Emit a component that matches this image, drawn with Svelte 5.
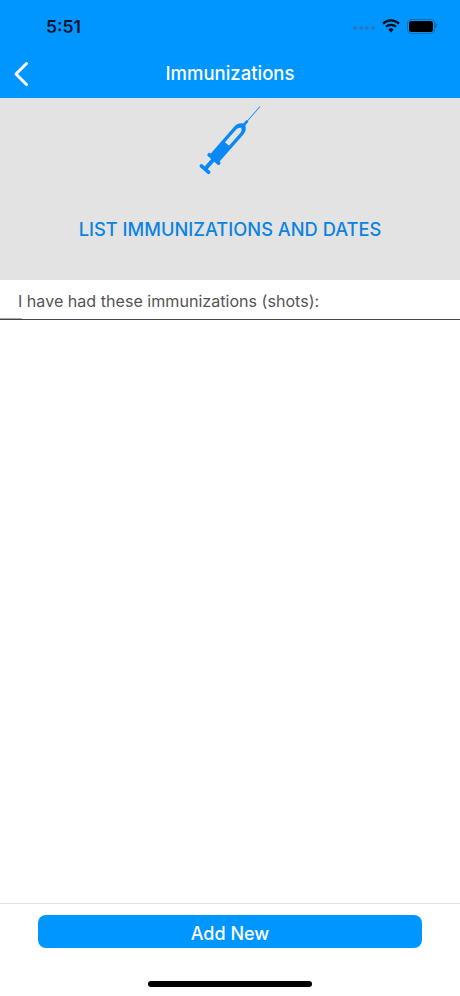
<script>
  const title = 'Immunizations'
</script>

<div class="screen">
  <header>
    <div class="status">
      <span class="time">5:51</span>
      <div class="status-icons">
        <div class="dots"><i></i><i></i><i></i><i></i></div>
        <svg class="wifi" width="18" height="14" viewBox="0 0 18 14">
          <path d="M1 4.6a11.6 11.6 0 0 1 16 0" fill="none" stroke="#050a14" stroke-width="2.2" />
          <path d="M4 7.8a7.3 7.3 0 0 1 10 0" fill="none" stroke="#050a14" stroke-width="2.2" />
          <path d="M9 13.4 6.4 10.5a3.8 3.8 0 0 1 5.2 0z" fill="#050a14" />
        </svg>
        <div class="battery"><div class="level"></div></div>
      </div>
    </div>
    <div class="nav">
      <svg class="back" width="16" height="26" viewBox="0 0 16 26">
        <path d="M13.5 2.5 3 13l10.5 10.5" fill="none" stroke="#fff" stroke-width="3" stroke-linecap="round" stroke-linejoin="round" />
      </svg>
      <h1>{title}</h1>
    </div>
  </header>

  <section class="hero">
    <svg class="syringe" width="70" height="74" viewBox="0 0 70 74">
      <g transform="translate(65 3.5) rotate(41.3)" fill="#0a88f5">
        <rect x="-0.4" y="0" width="0.8" height="22" />
        <rect x="-1.3" y="19" width="2.6" height="6" />
        <path fill-rule="evenodd" d="M-6 32q0-6 6-9q6 3 6 9V70h-12zM-2.7 33V50h5.4V33q0-3-2.7-4.6q-2.7 1.6-2.7 4.6z" />
        <rect x="-8" y="68" width="16" height="3.6" rx="1.4" />
        <rect x="-2" y="70" width="4" height="13" />
        <rect x="-6.5" y="81.5" width="13" height="3.6" rx="1.5" />
      </g>
    </svg>
    <h2>LIST IMMUNIZATIONS AND DATES</h2>
  </section>

  <div class="intro">I have had these immunizations (shots):</div>

  <div class="list"></div>

  <footer>
    <button type="button"><span>Add New</span></button>
    <div class="home-bar"></div>
  </footer>
</div>

<style>
  :global(body) {
    margin: 0;
    background: #fff;
  }
  .screen {
    width: 460px;
    height: 996px;
    display: flex;
    flex-direction: column;
    font-family: Inter, "Liberation Sans", sans-serif;
    overflow: hidden;
  }
  header {
    height: 98px;
    background: #0096ff;
    display: flex;
    flex-direction: column;
    flex-shrink: 0;
  }
  .status {
    height: 54px;
    display: flex;
    justify-content: space-between;
    align-items: center;
    padding: 0 25px 2px 46px;
    box-sizing: border-box;
  }
  .time {
    font-size: 17.5px;
    font-weight: 600;
    color: #07162b;
  }
  .status-icons {
    display: flex;
    align-items: center;
    gap: 6px;
  }
  .dots {
    display: flex;
    gap: 2px;
    margin-right: 1px;
    margin-top: 4px;
  }
  .dots i {
    width: 4px;
    height: 4px;
    border-radius: 50%;
    background: #2a78c4;
  }
  .battery {
    width: 24px;
    height: 11px;
    border: 1px solid #1a6db5;
    border-radius: 4px;
    padding: 1px;
    position: relative;
    margin-left: 1px;
  }
  .battery::after {
    content: '';
    position: absolute;
    right: -3px;
    top: 3px;
    width: 2px;
    height: 5px;
    border-radius: 0 2px 2px 0;
    background: #1a6db5;
  }
  .level {
    width: 100%;
    height: 100%;
    background: #000;
    border-radius: 2.5px;
  }
  .nav {
    flex: 1;
    position: relative;
    display: flex;
    align-items: center;
    justify-content: center;
  }
  .back {
    position: absolute;
    left: 13px;
    top: 7px;
  }
  h1 {
    margin: 0 0 7px;
    font-size: 18.5px;
    font-weight: 500;
    color: #fff;
  }
  .hero {
    height: 182px;
    background: #e3e3e3;
    display: flex;
    flex-direction: column;
    align-items: center;
    flex-shrink: 0;
  }
  .syringe {
    margin-top: 5px;
    margin-left: -1px;
  }
  h2 {
    margin: 41px 0 0;
    font-size: 18.3px;
    font-weight: 550;
    color: #0a84e0;
  }
  .intro {
    height: 28px;
    border-bottom: 1px solid #444;
    padding: 11px 0 0 18px;
    font-size: 16.1px;
    color: #555;
    flex-shrink: 0;
    position: relative;
  }
  /* short darker tick where the line starts */
  .intro::after {
    content: '';
    position: absolute;
    left: 0;
    bottom: 0;
    width: 22px;
    height: 1px;
    background: #aaa;
  }
  .list {
    flex: 1;
  }
  footer {
    height: 92px;
    border-top: 1px solid #e2e2e2;
    display: flex;
    flex-direction: column;
    align-items: center;
    flex-shrink: 0;
  }
  button {
    width: 384px;
    height: 33px;
    margin-top: 11px;
    border: 0;
    padding: 3px 0 0;
    border-radius: 8px;
    background: #0096ff;
    color: #fff;
    font: 500 18px Inter, "Liberation Sans", sans-serif;
  }
  .home-bar {
    width: 164px;
    height: 6px;
    margin-top: 33px;
    border-radius: 3px;
    background: #000;
  }
</style>
